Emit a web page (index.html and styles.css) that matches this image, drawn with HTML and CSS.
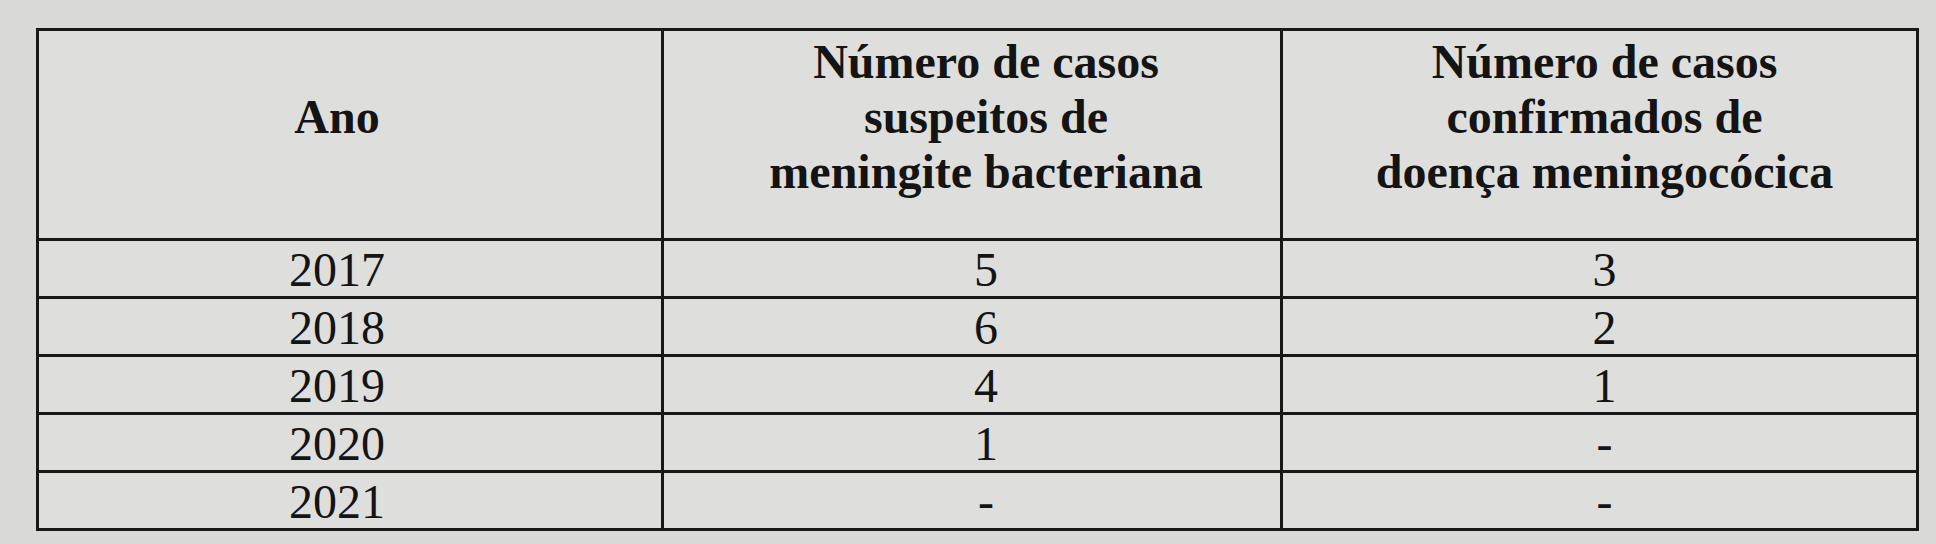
FILE: index.html
```html
<!DOCTYPE html>
<html lang="pt">
<head>
<meta charset="utf-8">
<title>Casos de meningite</title>
<link rel="stylesheet" href="styles.css">
</head>
<body>
<div class="sheet">
  <table class="cases">
    <colgroup>
      <col class="c-year">
      <col class="c-susp">
      <col class="c-conf">
    </colgroup>
    <thead>
      <tr class="head">
        <th class="year">Ano</th>
        <th class="susp">Número de casos<br>suspeitos de<br>meningite bacteriana</th>
        <th class="conf">Número de casos<br>confirmados de<br>doença meningocócica</th>
      </tr>
    </thead>
    <tbody>
      <tr><td class="year">2017</td><td class="susp">5</td><td class="conf">3</td></tr>
      <tr><td class="year">2018</td><td class="susp">6</td><td class="conf">2</td></tr>
      <tr><td class="year">2019</td><td class="susp">4</td><td class="conf">1</td></tr>
      <tr><td class="year">2020</td><td class="susp">1</td><td class="conf">-</td></tr>
      <tr class="last"><td class="year">2021</td><td class="susp">-</td><td class="conf">-</td></tr>
    </tbody>
  </table>
</div>
</body>
</html>
```
FILE: styles.css
```css
html, body {
  margin: 0;
  padding: 0;
}

body {
  width: 1936px;
  height: 544px;
  overflow: hidden;
  background: #d9dad7;
  font-family: "Liberation Serif", "Times New Roman", serif;
  color: #141414;
}

.sheet {
  padding: 28px 0 0 36px;
}

.cases {
  border-collapse: collapse;
  table-layout: fixed;
  width: 1880px;
  background: #dedfdc;
  border: 3px solid #181818;
}

.c-year { width: 625px; }
.c-susp { width: 619px; }
.c-conf { width: 636px; }

.cases th,
.cases td {
  border: 3px solid #181818;
  text-align: center;
  vertical-align: middle;
  font-size: 48px;
  padding: 0;
}

.cases th {
  font-weight: bold;
  line-height: 55px;
  padding-bottom: 37px;
}

.head {
  height: 210px;
}

.cases tbody tr {
  height: 58px;
}

.cases td {
  font-weight: normal;
  line-height: 52px;
  padding-top: 2px;
}

.cases .year {
  padding-right: 26px;
}

.cases .susp {
  padding-left: 28px;
}

.cases .conf {
  padding-left: 10px;
}
```
